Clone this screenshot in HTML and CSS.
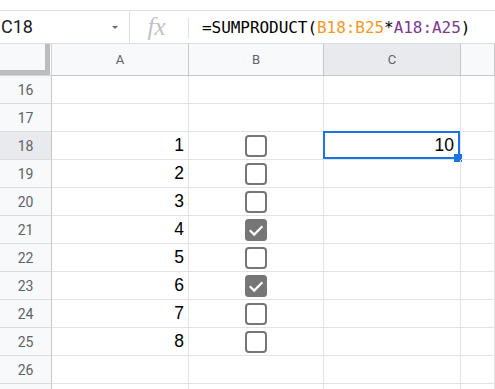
FILE: index.html
```html
<!DOCTYPE html>
<html>
<head>
<meta charset="utf-8">
<link rel="stylesheet" href="styles.css">
</head>
<body>
<div class="topstrip"></div>
<div class="fbar">
  <div class="namebox">
    <span class="ref">C18</span>
    <svg class="caret" width="6" height="3" viewBox="0 0 6 3"><path d="M0 0H6L3 3Z" fill="#6b6b6b"/></svg>
  </div>
  <div class="fx">fx</div>
  <div class="formula">=SUMPRODUCT(<span class="r1">B18:B25</span>*<span class="r2">A18:A25</span>)</div>
</div>
<div class="grid">
  <div class="hcell corner"><div class="freeze"></div></div>
  <div class="hcell">A</div>
  <div class="hcell">B</div>
  <div class="hcell sel">C</div>
  <div class="hcell"></div>

  <div class="rh">16</div><div class="c"></div><div class="c"></div><div class="c"></div><div class="c"></div>
  <div class="rh">17</div><div class="c"></div><div class="c"></div><div class="c"></div><div class="c"></div>

  <div class="rh sel">18</div><div class="c num">1</div>
  <div class="c cb"><svg width="22" height="22" viewBox="0 0 22 22"><rect x="1" y="1" width="20" height="20" rx="3" fill="#fff" stroke="#767676" stroke-width="2"/></svg></div>
  <div class="c num active">10<div class="selbox"></div><div class="handle"></div></div><div class="c"></div>

  <div class="rh">19</div><div class="c num">2</div>
  <div class="c cb"><svg width="22" height="22" viewBox="0 0 22 22"><rect x="1" y="1" width="20" height="20" rx="3" fill="#fff" stroke="#767676" stroke-width="2"/></svg></div>
  <div class="c"></div><div class="c"></div>

  <div class="rh">20</div><div class="c num">3</div>
  <div class="c cb"><svg width="22" height="22" viewBox="0 0 22 22"><rect x="1" y="1" width="20" height="20" rx="3" fill="#fff" stroke="#767676" stroke-width="2"/></svg></div>
  <div class="c"></div><div class="c"></div>

  <div class="rh">21</div><div class="c num">4</div>
  <div class="c cb"><svg width="22" height="22" viewBox="0 0 22 22"><rect x="0" y="0" width="22" height="22" rx="3.5" fill="#767676"/><path d="M4.8 11.3L9.2 15.6L17.4 7.2" fill="none" stroke="#fff" stroke-width="2.2"/></svg></div>
  <div class="c"></div><div class="c"></div>

  <div class="rh">22</div><div class="c num">5</div>
  <div class="c cb"><svg width="22" height="22" viewBox="0 0 22 22"><rect x="1" y="1" width="20" height="20" rx="3" fill="#fff" stroke="#767676" stroke-width="2"/></svg></div>
  <div class="c"></div><div class="c"></div>

  <div class="rh">23</div><div class="c num">6</div>
  <div class="c cb"><svg width="22" height="22" viewBox="0 0 22 22"><rect x="0" y="0" width="22" height="22" rx="3.5" fill="#767676"/><path d="M4.8 11.3L9.2 15.6L17.4 7.2" fill="none" stroke="#fff" stroke-width="2.2"/></svg></div>
  <div class="c"></div><div class="c"></div>

  <div class="rh">24</div><div class="c num">7</div>
  <div class="c cb"><svg width="22" height="22" viewBox="0 0 22 22"><rect x="1" y="1" width="20" height="20" rx="3" fill="#fff" stroke="#767676" stroke-width="2"/></svg></div>
  <div class="c"></div><div class="c"></div>

  <div class="rh">25</div><div class="c num">8</div>
  <div class="c cb"><svg width="22" height="22" viewBox="0 0 22 22"><rect x="1" y="1" width="20" height="20" rx="3" fill="#fff" stroke="#767676" stroke-width="2"/></svg></div>
  <div class="c"></div><div class="c"></div>

  <div class="rh">26</div><div class="c"></div><div class="c"></div><div class="c"></div><div class="c"></div>
  <div class="rh"></div><div class="c"></div><div class="c"></div><div class="c"></div><div class="c"></div>
</div>
</body>
</html>
```
FILE: styles.css
```css
* { box-sizing: border-box; }
html, body { margin: 0; padding: 0; background: #fff; overflow: hidden; }
body { width: 495px; height: 389px; font-family: Roboto, "Liberation Sans", Arial, sans-serif; }

.topstrip { height: 11px; border-bottom: 1px solid #e0e0e0; }

.fbar {
  display: flex;
  height: 33px;
  border-bottom: 1px solid #dadce0;
  align-items: stretch;
}
.namebox {
  width: 130px;
  border-right: 1px solid #e0e0e0;
  display: flex;
  align-items: center;
  padding-left: 1px;
  padding-right: 11px;
}
.ref { font-size: 18px; color: #202124; flex: 1; line-height: 1; }
.caret { display: block; margin-top: 1px; }
.fx {
  width: 59px;
  display: flex;
  align-items: center;
  justify-content: center;
  font-family: "Liberation Serif", serif;
  font-style: italic;
  font-size: 25px;
  color: #c2c2c2;
  position: relative;
  padding-right: 6px;
}
.fx::after {
  content: "";
  position: absolute;
  right: 0;
  top: 7px;
  bottom: 5px;
  width: 1px;
  background: #e0e0e0;
}
.formula {
  padding-left: 13px;
  display: flex;
  align-items: center;
  font-family: "DejaVu Sans Mono", "Liberation Mono", monospace;
  font-size: 16px;
  color: #000;
  white-space: pre;
  letter-spacing: -0.05px;
}
.r1 { color: #f7981d; }
.r2 { color: #7e3794; }

.grid {
  display: grid;
  grid-template-columns: 52px 137px 135px 137px 1fr;
  grid-template-rows: 32px repeat(11, 28px) 6px;
  overflow: hidden;
}
.hcell {
  background: #f8f9fa;
  border-right: 1px solid #c7c7c7;
  border-bottom: 1px solid #c7c7c7;
  display: flex;
  align-items: center;
  justify-content: center;
  font-size: 13px;
  color: #5f6368;
}
.hcell.sel { background: #e8eaed; }
.corner { justify-content: flex-start; align-items: flex-start; border-right-color: #d4d4d4; border-bottom-color: #d4d4d4; }
.freeze {
  width: 50px;
  height: 31px;
  border-right: 5px solid #bdbdbd;
  border-bottom: 5px solid #bdbdbd;
}
.rh {
  background: #f8f9fa;
  border-right: 1px solid #c7c7c7;
  border-bottom: 1px solid #dadce0;
  display: flex;
  align-items: center;
  justify-content: center;
  font-size: 14px;
  color: #5f6368;
}
.rh.sel { background: #e8eaed; }
.c {
  border-right: 1px solid #e2e3e3;
  border-bottom: 1px solid #e2e3e3;
  position: relative;
}
.num {
  font-family: "Liberation Sans", Arial, sans-serif;
  font-size: 17.5px;
  line-height: 27px;
  text-align: right;
  padding-right: 4px;
  color: #000;
}
.active { padding-right: 6px; }
.cb { display: flex; align-items: center; justify-content: center; padding-right: 1px; }
.cb svg { display: block; }
.selbox {
  position: absolute;
  left: -1px;
  top: -1px;
  width: 137px;
  height: 28px;
  border: 2px solid #1a73e8;
}
.handle {
  position: absolute;
  left: 130px;
  top: 22px;
  width: 8px;
  height: 8px;
  background: #1a73e8;
}
```
